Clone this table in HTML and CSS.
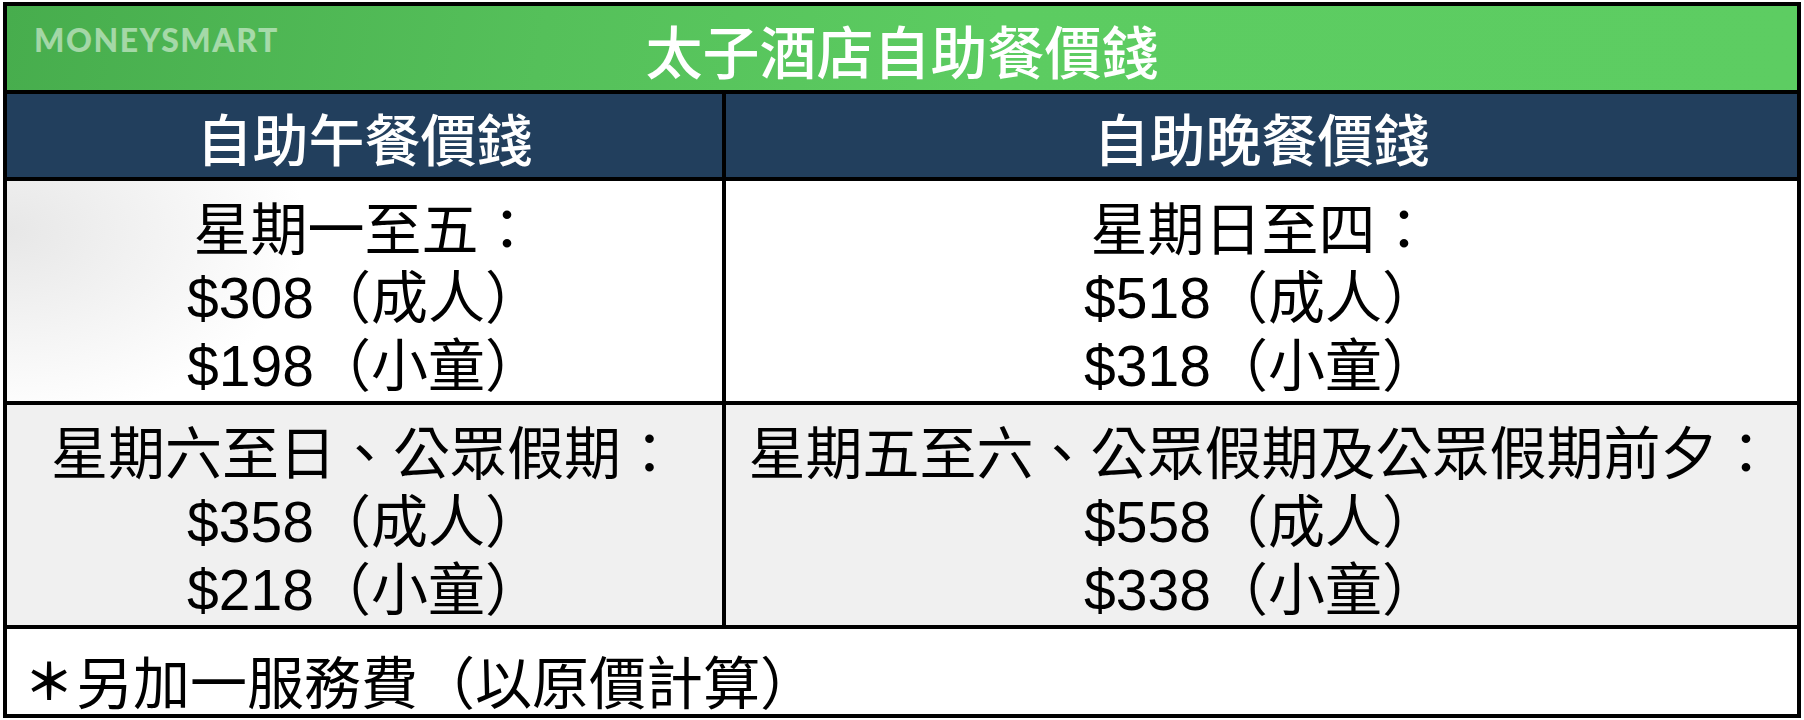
FILE: index.html
```html
<!DOCTYPE html>
<html lang="zh-Hant">
<head>
<meta charset="utf-8">
<title>太子酒店自助餐價錢</title>
<link rel="stylesheet" href="styles.css">
</head>
<body>
<div class="table">
  <div class="title">
    <span class="logo">MONEYSMART</span>
    <span class="title-text">太子酒店自助餐價錢</span>
  </div>
  <div class="head">自助午餐價錢</div>
  <div class="head">自助晚餐價錢</div>
  <div class="cell cell-shade">
    <div>星期一至五：</div>
    <div>$308（成人）</div>
    <div>$198（小童）</div>
  </div>
  <div class="cell">
    <div>星期日至四：</div>
    <div>$518（成人）</div>
    <div>$318（小童）</div>
  </div>
  <div class="cell cell-grey">
    <div>星期六至日、公眾假期：</div>
    <div>$358（成人）</div>
    <div>$218（小童）</div>
  </div>
  <div class="cell cell-grey">
    <div>星期五至六、公眾假期及公眾假期前夕：</div>
    <div>$558（成人）</div>
    <div>$338（小童）</div>
  </div>
  <div class="note"><span class="star">＊</span>另加一服務費（以原價計算）</div>
</div>
</body>
</html>
```

FILE: styles.css
```css
html, body {
  margin: 0;
  padding: 0;
  background: #ffffff;
}

.table {
  box-sizing: border-box;
  width: 1798px;
  margin: 2px 0 0 3px;
  padding: 4px;
  display: grid;
  grid-template-columns: 715px 1071px;
  grid-template-rows: 84px 83px 220px 220px 85px;
  gap: 4px;
  background: #000;
  font-family: "Liberation Sans", "Noto Sans CJK TC", sans-serif;
  color: #000;
}

.title {
  grid-column: 1 / -1;
  position: relative;
  background: linear-gradient(100deg, #47ad4d 0%, #55c05a 30%, #5ccc61 55%, #5dcd62 100%);
  text-align: center;
  box-sizing: border-box;
  padding-top: 15px;
}

.title-text {
  font-family: "Noto Sans CJK TC", sans-serif;
  font-weight: 500;
  font-size: 57px;
  line-height: 57px;
  color: #ffffff;
}

.logo {
  position: absolute;
  left: 27px;
  top: 14px;
  font-family: "Lato", "Open Sans", sans-serif;
  font-weight: 900;
  font-size: 32px;
  letter-spacing: 1.5px;
  line-height: 40px;
  color: rgba(255, 255, 255, 0.5);
}

.head {
  background: #223f5d;
  color: #ffffff;
  text-align: center;
  font-family: "Noto Sans CJK TC", sans-serif;
  font-weight: 500;
  font-size: 56px;
  line-height: 56px;
  box-sizing: border-box;
  padding-top: 15px;
}

.cell {
  background: #ffffff;
  text-align: center;
  font-size: 57px;
  line-height: 68px;
  box-sizing: border-box;
  padding-top: 15px;
  white-space: nowrap;
}

.cell-shade {
  background:
    radial-gradient(ellipse 300px 190px at 0 50px, rgba(215, 215, 215, 0.6), rgba(255, 255, 255, 0) 100%),
    #ffffff;
}

.cell-grey {
  background: #f0f0f0;
}

.note {
  grid-column: 1 / -1;
  background: #ffffff;
  font-size: 57px;
  line-height: 68px;
  box-sizing: border-box;
  padding: 15px 0 0 17px;
  white-space: nowrap;
}

.star {
  display: inline-block;
  font-family: "Noto Sans CJK TC", sans-serif;
  font-weight: 700;
  font-size: 50px;
  width: 52px;
  text-align: left;
  vertical-align: 4px;
}
```
